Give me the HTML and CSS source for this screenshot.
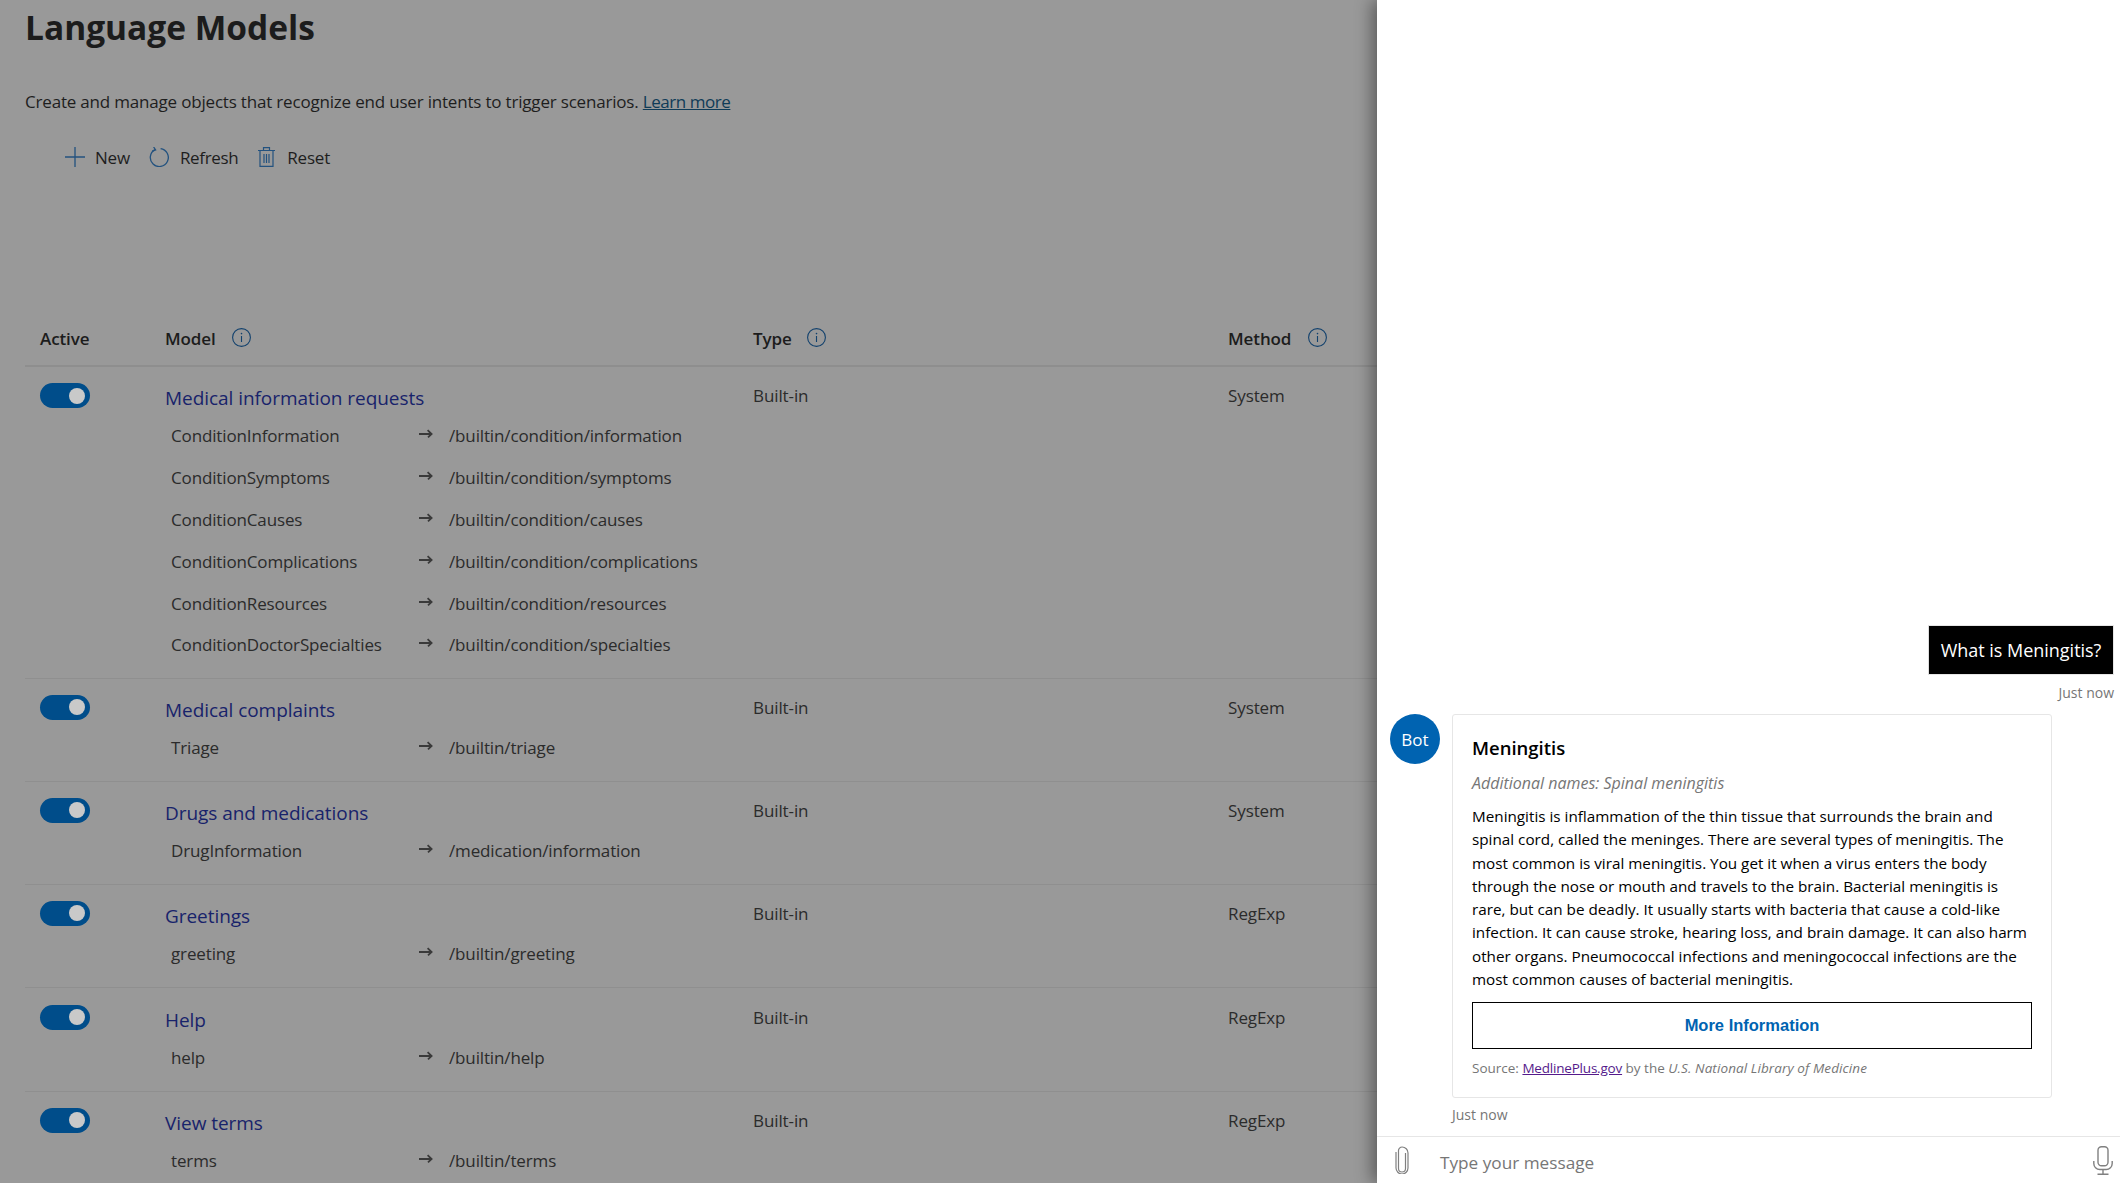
FILE: index.html
```html
<!DOCTYPE html>
<html lang="en">
<head>
<meta charset="utf-8">
<title>Language Models</title>
<link rel="stylesheet" href="styles.css">
</head>
<body>
<svg class="defs" width="0" height="0" aria-hidden="true">
  <symbol id="i-info" viewBox="0 0 19 19"><circle cx="9.5" cy="9.5" r="8.9" fill="none" stroke="currentColor" stroke-width="1.1"/><path d="M9.5 8v6" stroke="currentColor" stroke-width="1.1"/><circle cx="9.5" cy="5.6" r=".8" fill="currentColor"/></symbol>
  <symbol id="i-arrow" viewBox="0 0 14 10"><path d="M0 5h12.6M8.6 1.2 12.6 5 9 8.4" fill="none" stroke="currentColor" stroke-width="1.8"/></symbol>
</svg>
<main class="page">
  <h1 class="title">Language Models</h1>
  <p class="desc">Create and manage objects that recognize end user intents to trigger scenarios. <a class="learn" href="#">Learn more</a></p>
  <div class="toolbar">
    <span class="tool tool-new"><svg class="ticon" viewBox="0 0 20 20"><path d="M10 0v20M0 10h20" fill="none" stroke="currentColor" stroke-width="1.3"/></svg><span class="tlabel">New</span></span>
    <span class="tool tool-refresh"><svg class="ticon" viewBox="0 0 20 20"><path d="M11.6 1.6A9 9 0 1 1 6 2.6" fill="none" stroke="currentColor" stroke-width="1.3"/><path d="M4.6 0 6.6 3 3.2 4.2" fill="none" stroke="currentColor" stroke-width="1.3"/></svg><span class="tlabel">Refresh</span></span>
    <span class="tool tool-reset"><svg class="ticon ticon-trash" viewBox="0 0 17 20"><path d="M0 3.5h17M2 3.5V19.4h13V3.5M5.5 3.5V.7h6v2.8M6 7v9M8.5 7v9M11 7v9" fill="none" stroke="currentColor" stroke-width="1.2"/></svg><span class="tlabel">Reset</span></span>
  </div>
  <div class="table">
    <div class="grid head">
      <span>Active</span>
      <span class="hcell">Model<svg class="info info-model"><use href="#i-info"/></svg></span>
      <span class="hcell">Type<svg class="info"><use href="#i-info"/></svg></span>
      <span class="hcell">Method<svg class="info info-method"><use href="#i-info"/></svg></span>
    </div>
    <div class="grid row row-first">
      <span class="toggle"><i class="knob"></i></span>
      <div><a class="mname" href="#">Medical information requests</a>
        <ul class="subs">
          <li class="sub"><span>ConditionInformation</span><svg class="arrow"><use href="#i-arrow"/></svg><span>/builtin/condition/information</span></li>
          <li class="sub"><span>ConditionSymptoms</span><svg class="arrow"><use href="#i-arrow"/></svg><span>/builtin/condition/symptoms</span></li>
          <li class="sub"><span>ConditionCauses</span><svg class="arrow"><use href="#i-arrow"/></svg><span>/builtin/condition/causes</span></li>
          <li class="sub"><span>ConditionComplications</span><svg class="arrow"><use href="#i-arrow"/></svg><span>/builtin/condition/complications</span></li>
          <li class="sub"><span>ConditionResources</span><svg class="arrow"><use href="#i-arrow"/></svg><span>/builtin/condition/resources</span></li>
          <li class="sub"><span>ConditionDoctorSpecialties</span><svg class="arrow"><use href="#i-arrow"/></svg><span>/builtin/condition/specialties</span></li>
        </ul>
      </div>
      <span class="cell">Built-in</span><span class="cell">System</span>
    </div>
    <div class="grid row">
      <span class="toggle"><i class="knob"></i></span>
      <div><a class="mname" href="#">Medical complaints</a>
        <ul class="subs"><li class="sub"><span>Triage</span><svg class="arrow"><use href="#i-arrow"/></svg><span>/builtin/triage</span></li></ul>
      </div>
      <span class="cell">Built-in</span><span class="cell">System</span>
    </div>
    <div class="grid row">
      <span class="toggle"><i class="knob"></i></span>
      <div><a class="mname" href="#">Drugs and medications</a>
        <ul class="subs"><li class="sub"><span>DrugInformation</span><svg class="arrow"><use href="#i-arrow"/></svg><span>/medication/information</span></li></ul>
      </div>
      <span class="cell">Built-in</span><span class="cell">System</span>
    </div>
    <div class="grid row">
      <span class="toggle"><i class="knob"></i></span>
      <div><a class="mname" href="#">Greetings</a>
        <ul class="subs"><li class="sub"><span>greeting</span><svg class="arrow"><use href="#i-arrow"/></svg><span>/builtin/greeting</span></li></ul>
      </div>
      <span class="cell">Built-in</span><span class="cell">RegExp</span>
    </div>
    <div class="grid row row-help">
      <span class="toggle"><i class="knob"></i></span>
      <div><a class="mname" href="#">Help</a>
        <ul class="subs"><li class="sub"><span>help</span><svg class="arrow"><use href="#i-arrow"/></svg><span>/builtin/help</span></li></ul>
      </div>
      <span class="cell">Built-in</span><span class="cell">RegExp</span>
    </div>
    <div class="grid row">
      <span class="toggle"><i class="knob"></i></span>
      <div><a class="mname" href="#">View terms</a>
        <ul class="subs"><li class="sub"><span>terms</span><svg class="arrow"><use href="#i-arrow"/></svg><span>/builtin/terms</span></li></ul>
      </div>
      <span class="cell">Built-in</span><span class="cell">RegExp</span>
    </div>
  </div>
</main>
<aside class="chat">
  <div class="messages">
    <div class="user-msg">
      <div class="bubble">What is Meningitis?</div>
      <div class="stamp">Just now</div>
    </div>
    <div class="bot-msg">
      <div class="avatar">Bot</div>
      <div class="bot-col">
        <div class="card">
          <div class="card-title">Meningitis</div>
          <div class="card-sub">Additional names: Spinal meningitis</div>
          <p class="card-body">Meningitis is inflammation of the thin tissue that surrounds the brain and<br>spinal cord, called the meninges. There are several types of meningitis. The<br>most common is viral meningitis. You get it when a virus enters the body<br>through the nose or mouth and travels to the brain. Bacterial meningitis is<br>rare, but can be deadly. It usually starts with bacteria that cause a cold-like<br>infection. It can cause stroke, hearing loss, and brain damage. It can also harm<br>other organs. Pneumococcal infections and meningococcal infections are the<br>most common causes of bacterial meningitis.</p>
          <button class="more" type="button">More Information</button>
          <div class="source">Source: <a class="source-link" href="#">MedlinePlus.gov</a> by the <em class="source-org">U.S. National Library of Medicine</em></div>
        </div>
        <div class="stamp stamp-bot">Just now</div>
      </div>
    </div>
  </div>
  <div class="inputbar">
    <svg class="clip" viewBox="0 0 14 28"><path d="M10.5 7v15.5a3.5 3.5 0 0 1-7 0V4.6a3.6 3.6 0 0 1 3.6-3.6 5.9 5.9 0 0 1 5.9 5.9v15.2a6 6 0 0 1-6 5.9 6 6 0 0 1-6-5.9V6" fill="none" stroke="currentColor" stroke-width="1.2"/></svg>
    <span class="placeholder">Type your message</span>
    <svg class="mic" viewBox="0 0 20 29"><rect x="5" y=".7" width="10" height="19" rx="3.5" fill="none" stroke="currentColor" stroke-width="1.4"/><path d="M.8 15v2.5a6 6 0 0 0 6 6h6.4a6 6 0 0 0 6-6V15M10 23.5V28M4.5 28.3h11" fill="none" stroke="currentColor" stroke-width="1.4"/></svg>
  </div>
</aside>
</body>
</html>
```
FILE: styles.css
```css
* { box-sizing: border-box; }
html, body { margin: 0; height: 100%; }
body {
  background: #999;
  overflow: hidden;
  font-family: "Open Sans", "Noto Sans", sans-serif;
  color: #1e1e1e;
}
.defs { position: absolute; }
.page { width: 1377px; height: 1183px; overflow: hidden; padding-left: 25px; }
.title {
  margin: 0;
  font-size: 33.5px;
  line-height: 54px;
  font-weight: 700;
  color: #1c1c1c;
}
.desc {
  margin: 36px 0 0;
  font-size: 17px;
  line-height: 24px;
  letter-spacing: -.19px;
  color: #1e1e1e;
}
.learn { color: #0f3b57; letter-spacing: -.45px; }
.toolbar { display: flex; align-items: center; height: 40px; margin-top: 23px; padding-left: 40px; }
.tool { display: flex; align-items: center; font-size: 17px; letter-spacing: -.2px; color: #1e1e1e; }
.ticon { width: 20px; height: 20px; color: #23527f; flex: none; }
.ticon-trash { width: 17px; }
.tlabel { margin-left: 10px; }
.tool-refresh { margin-left: 19px; letter-spacing: -.35px; }
.tool-refresh .tlabel { margin-left: 11px; }
.tool-reset { margin-left: 20px; }
.tool-reset .tlabel { margin-left: 12px; }
.table { margin-top: 133px; }
.grid { display: grid; grid-template-columns: 125px 588px 475px 1fr; padding-left: 15px; }
.head {
  height: 57px;
  align-items: center;
  font-size: 17px;
  font-weight: 600;
  letter-spacing: -.1px;
  padding-top: 1px;
  border-bottom: 2px solid #8e8e8e;
  color: #1c1c1c;
}
.hcell { display: flex; align-items: center; }
.info { width: 19px; height: 19px; margin-left: 15px; color: #12416d; margin-top: -1px; }
.info-model { margin-left: 16px; }
.info-method { margin-left: 17px; }
.row { padding-top: 16px; padding-bottom: 12px; border-bottom: 1px solid #8f8f8f; }
.row-first { padding-bottom: 12.2px; }
.row-first .sub { height: 41.8px; }
.row-help { padding-top: 17px; }
.toggle {
  width: 50px; height: 25px; border-radius: 13px;
  background: #004d8a;
  display: flex; align-items: center; justify-content: flex-end;
  padding-right: 5px;
}
.knob { width: 16px; height: 16px; border-radius: 50%; background: #c9c9c9; }
.mname { display: block; font-size: 19px; line-height: 30px; letter-spacing: -.05px; color: #18236b; text-decoration: none; }
.cell { font-size: 17px; line-height: 24px; letter-spacing: -.1px; color: #2b2b2b; padding-top: 1px; }
.subs { list-style: none; margin: 2px 0 0; padding: 0 0 0 6px; }
.sub {
  display: grid;
  grid-template-columns: 247px 31px 1fr;
  align-items: center;
  height: 42px;
  font-size: 17px;
  letter-spacing: -.14px;
  color: #2b2b2b;
}
.arrow { width: 14px; height: 10px; color: #3a3a3a; margin-left: 1px; margin-top: -3px; }
.chat {
  position: absolute; top: 0; right: 0; bottom: 0;
  width: 743px;
  background: #fff;
  display: flex; flex-direction: column;
  box-shadow: -5px 0 16px rgba(0,0,0,.4);
}
.messages { flex: 1; display: flex; flex-direction: column; justify-content: flex-end; padding-bottom: 12px; }
.user-msg { display: flex; flex-direction: column; align-items: flex-end; padding-right: 6px; }
.bubble {
  height: 50px; width: 186px;
  background: #000; color: #fff;
  display: flex; align-items: center; justify-content: center;
  font-size: 18px;
  letter-spacing: -.02px;
  border: 1px solid #e6e6e6; border-left-color: #ddd;
}
.stamp { font-size: 14px; line-height: 20px; color: #767676; margin-top: 8px; }
.bot-msg { display: flex; margin-top: 11px; padding-left: 13px; }
.avatar {
  width: 50px; height: 50px; border-radius: 50%; flex: none;
  background: #0063b1; color: #fff;
  display: flex; align-items: center; justify-content: center;
  font-size: 17px;
}
.bot-col { margin-left: 12px; width: 600px; }
.card {
  border: 1px solid #e6e6e6; border-radius: 3px;
  padding: 19px 19px 18px;
  height: 384px;
  color: #000;
}
.card-title { font-size: 18.5px; line-height: 28px; font-weight: 600; }
.card-sub { margin-top: 9px; font-size: 16px; line-height: 24px; font-style: italic; color: #767676; }
.card-body { margin: 10px 0 0; font-size: 15.25px; line-height: 23.3px; white-space: nowrap; }
.more {
  display: block; width: 100%; height: 47px; margin-top: 11px;
  background: #fff; border: 1.5px solid #000;
  color: #0063b1;
  font: bold 16.5px "Liberation Sans", sans-serif;
}
.source { margin-top: 9px; font-size: 13.5px; line-height: 20px; color: #767676; }
.source-link { color: #551a8b; letter-spacing: -.2px; }
.source-org { letter-spacing: .1px; }
.stamp-bot { margin-top: 8px; line-height: 18px; }
.inputbar {
  height: 47px; flex: none;
  border-top: 1px solid #e6e6e6;
  display: flex; align-items: center;
  padding: 0 7px 0 18px;
  color: #767676;
}
.clip { width: 14px; height: 28px; flex: none; color: #808080; }
.placeholder { flex: 1; margin-left: 31px; padding-top: 4px; font-size: 17.2px; color: #767676; }
.mic { width: 20px; height: 29px; flex: none; color: #808080; }
```
